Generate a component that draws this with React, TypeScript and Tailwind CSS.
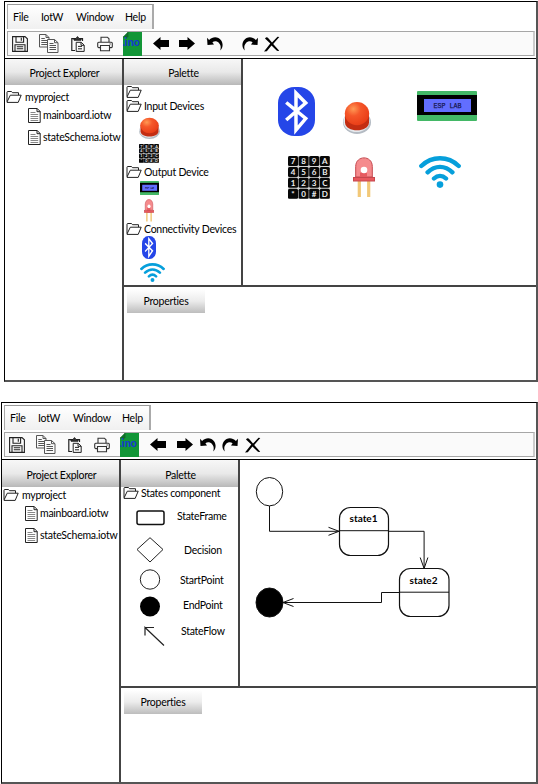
import React from "react";

const label = "block whitespace-pre font-['Lato','Open_Sans',sans-serif] text-[10.5px] leading-[14px] tracking-[-0.25px] text-black";

function Save() {
  return (
    <svg className="block h-4 w-4" viewBox="0 0 16 16" fill="none" stroke="#222" strokeWidth="1.1">
      <path d="M.6.6H13l2.4 2.2v12.6H.6zM4 .8v5.4h7.6V.8M9.3 1.7v3M3 15V8.7h10V15M4.8 10.8h6.4M4.8 12.8h6.4" />
    </svg>
  );
}
function Copy() {
  return (
    <svg className="block h-[19px] w-5" viewBox="0 0 20 19" fill="#fafafa" stroke="#555" strokeWidth="1">
      <path d="M.5.5H7l3 3v9.5H.5zM7 .5v3h3" />
      <path d="M2.3 4.5h3.5M2.3 6.5h6M2.3 8.5h6M2.3 10.5h6" />
      <path d="M8.5 5.5h7l3.5 3.2v9.8H8.5zM15.5 5.5v3.2H19" />
      <path d="M10.5 9.5h4M10.5 11.5h6.5M10.5 13.5h6.5M10.5 15.5h6.5" />
    </svg>
  );
}
function Paste() {
  return (
    <svg className="block h-4 w-[14px]" viewBox="0 0 14 16" fill="none" stroke="#222">
      <path d="M4 14.5H.8V2.6H3M10 2.6h1.5v2.5" strokeWidth="1.2" />
      <path d="M3 2.5h2L6.5.6 8 2.5h2v1.7H3z" fill="#333" />
      <path d="M5.2 6.3h5l3 2.8v6.3h-8zM10 6.3v3h3M7 10.4h4M7 12.8h4" />
    </svg>
  );
}
function Print() {
  return (
    <svg className="block h-4 w-4" viewBox="0 0 16 16" fill="none" stroke="#333" strokeWidth="1.1">
      <path d="M4 6V1.2h6.4L12 2.8V6M3.5 11.6H1.7q-1-.1-1-1V7.3q0-1 1-1h12.6q1 0 1 1v3.3q0 1-1 1h-1.8M3.5 9.5h9v5.2h-9zM12.5 8h1.2" />
    </svg>
  );
}
function Ino() {
  return (
    <span className="relative block h-6 w-[19px] overflow-hidden">
      <svg className="block h-6 w-[19px]" viewBox="0 0 19 24">
        <path d="M5 0H19v24H0V5z" fill="#129637" />
        <path d="M5 0v5H0" fill="#11712c" stroke="#17602a" strokeWidth=".7" />
      </svg>
      <span className="absolute -left-px top-[3px] font-['Lato',sans-serif] text-[11px] font-bold leading-[14px] text-[#1637d4]">.ino</span>
    </span>
  );
}
function Arrow({ right = false }: { right?: boolean }) {
  return (
    <svg className={right ? "block h-[13px] w-4 rotate-180" : "block h-[13px] w-4"} viewBox="0 0 16 13">
      <path d="M0 6.5 7.5 0v3.1H16v6.8H7.5V13z" />
    </svg>
  );
}
function Turn({ redo = false }: { redo?: boolean }) {
  return (
    <svg className={redo ? "block h-[14px] w-4 -scale-x-100" : "block h-[14px] w-4"} viewBox="0 0 16 14">
      <path d="M0 .8 2.1 3C6-1 11.5-.2 14 3.2c2.2 3 2.3 7-.8 10.4 1-3.8.5-6-1.3-7.7-1.9-1.9-4.6-2-6.5-.6L7 7.6.5 8z" />
    </svg>
  );
}
function Cross() {
  return (
    <svg className="block h-4 w-4" viewBox="0 0 16 16">
      <path d="M1 2.5Q3-.3 5 3l3 3.6L13.5.7l1.8.2L9.2 8l6 6.8q-2 .5-3.1-.7L7.5 9.5 2.8 15.2 0 15.4 6.3 7.6z" />
    </svg>
  );
}
function Folder() {
  return (
    <svg className="block h-3 w-4 shrink-0" viewBox="0 0 16 12" fill="none" stroke="#222" strokeWidth="1">
      <path d="M1 10.5V1.3Q1 .5 2 .5h3.5l1 1.2h6v2.4M1 11 4.3 4.2h10.9l-3 7.2H.8" />
    </svg>
  );
}
function Doc() {
  return (
    <svg className="block h-[15px] w-[13px] shrink-0" viewBox="0 0 13 15" fill="#fff" stroke="#222">
      <path d="M.5.5h8.7l3 3v11H.5zM9 .5v3.2h3.2" />
      <path d="M2.5 4.5h5M2.5 6.5h7.7M2.5 8.5h7.7M2.5 10.5h7.7M2.5 12.5h7.7" stroke="#888" strokeWidth="1" />
    </svg>
  );
}

function Bluetooth({ className }: { className: string }) {
  return (
    <svg className={className} viewBox="0 0 36 49" preserveAspectRatio="none">
      <rect width="36" height="49" rx="16" ry="16" fill="#2546e8" />
      <path d="m8 15.5 19 16L17.5 43V6L27 16 8 33" fill="none" stroke="#fff" strokeWidth="3.4" />
    </svg>
  );
}
function PushButton({ className }: { className: string }) {
  return (
    <svg className={className} viewBox="0 0 28 34" preserveAspectRatio="none">
      <defs>
        <radialGradient id="cap" cx=".35" cy=".3" r=".75">
          <stop stopColor="#ff9a55" />
          <stop offset=".4" stopColor="#f5572a" />
          <stop offset="1" stopColor="#e83c16" />
        </radialGradient>
      </defs>
      <ellipse cx="14" cy="22" rx="14" ry="12" fill="#b4bbc3" />
      <ellipse cx="13.5" cy="21" rx="13" ry="11" fill="#e5e9ed" />
      <path d="M2 12h24v10c0 11-24 11-24 0z" fill="#c32d12" />
      <ellipse cx="14" cy="13" rx="12.2" ry="12" fill="url(#cap)" />
    </svg>
  );
}
const keys = ["7", "8", "9", "A", "4", "5", "6", "B", "1", "2", "3", "C", "*", "0", "#", "D"];
function Keypad({ className }: { className: string }) {
  return (
    <svg className={className} viewBox="0 0 42 43" preserveAspectRatio="none">
      <rect width="42" height="43" fill="#d5d5d5" />
      {keys.map((k, i) => (
        <g key={k} transform={`translate(${(i % 4) * 10.6} ${Math.floor(i / 4) * 10.9})`}>
          <rect width="10" height="10" rx="1.5" fill="#080808" />
          <text x="5" y="8" textAnchor="middle" fill="#eee" fontFamily="Lato" fontSize="8" fontWeight="700">{k}</text>
        </g>
      ))}
    </svg>
  );
}
function Lcd({ className }: { className: string }) {
  return (
    <svg className={className} viewBox="0 0 60 30" preserveAspectRatio="none">
      <rect width="60" height="30" rx="1" fill="#43b866" />
      <rect y="4" width="60" height="20" fill="#000" />
      <rect x="7" y="8" width="47" height="13" fill="#626eff" />
      <text x="16.5" y="17.3" fill="#171750" fontFamily="Liberation Mono" fontSize="8" textLength="28" lengthAdjust="spacingAndGlyphs" stroke="#171750" strokeWidth=".25" xmlSpace="preserve">ESP LAB</text>
    </svg>
  );
}
function Led({ className }: { className: string }) {
  return (
    <svg className={className} viewBox="0 0 22 41" preserveAspectRatio="none">
      <path d="M6.3 23v17M15.7 23v17" stroke="#f2c878" strokeWidth="3.2" />
      <path d="M2.7 20V9.5C2.7-2 19.3-2 19.3 9.5V20z" fill="#f58b8d" stroke="#c5484e" />
      <path d="M7 24v-8l3-2 4 2v8" fill="#e65b60" />
      <circle cx="11" cy="13" r="3.3" fill="#fff" />
      <rect x=".5" y="20.5" width="21" height="3.5" fill="#e9585d" stroke="#c5484e" />
    </svg>
  );
}
function Wifi({ className }: { className: string }) {
  return (
    <svg className={className} viewBox="0 0 42 32" preserveAspectRatio="none" fill="none" stroke="#069fdb" strokeLinecap="round" strokeWidth="4.4">
      <path d="M2.3 10C13-.3 29-.3 39.7 10M8.6 16.3c7.4-7.2 17.4-7.2 24.8 0M15 22.5c3.6-3.4 8.4-3.4 12 0" />
      <circle cx="21" cy="28.6" r="3.3" fill="#069fdb" stroke="none" />
    </svg>
  );
}

function MenuBar() {
  return (
    <nav className="ml-[2px] mt-[2px] flex h-[25px] w-[147px] border-l border-r-2 border-t border-l-[#aaa] border-r-[#aaa] border-t-[#999] bg-linear-to-b from-white to-[#f0f0f0] pt-[5px]">
      <span className={`${label} ml-[5px] w-[28px]`}>File</span>
      <span className={`${label} w-[35px]`}>IotW</span>
      <span className={`${label} w-[49px]`}>Window</span>
      <span className={label}>Help</span>
    </nav>
  );
}

function ToolBar({ second = false }: { second?: boolean }) {
  return (
    <div className="ml-[2px] mr-px mt-[2px] flex h-[25px] shrink-0 items-center border border-r-2 border-[#a6a6a6] border-r-[#ccc] bg-[#fafafa]">
      <div className="flex w-[31px] pl-1"><Save /></div>
      <div className="flex w-[32px]"><Copy /></div>
      <div className="flex w-[26px]"><Paste /></div>
      <div className="flex w-[26px]"><Print /></div>
      <div className="flex w-[30px]"><Ino /></div>
      <div className={second ? "flex w-[27px]" : "flex w-[26px]"}><Arrow /></div>
      <div className={second ? "flex w-[23px]" : "flex w-[28px]"}><Arrow right /></div>
      <div className={second ? "flex w-[22px]" : "flex w-[35px]"}><Turn /></div>
      <div className={second ? "flex w-[23px]" : "flex w-[22px]"}><Turn redo /></div>
      <Cross />
    </div>
  );
}

function Header({ children, second = false }: { children: React.ReactNode; second?: boolean }) {
  return (
    <div className={`flex shrink-0 items-center justify-center bg-linear-to-b from-[#f7f7f7] via-[#e9e9e9] to-[#b8b8b8] pl-[2px] ${second ? "h-[27px] pt-[3px]" : "h-[26px] pt-px"}`}>
      <span className={label}>{children}</span>
    </div>
  );
}

function FolderRow({ children }: { children?: React.ReactNode }) {
  return <div className="flex h-[14px] items-center gap-[2px] pl-[2px]"><Folder /><span className={label}>{children}</span></div>;
}

function Explorer({ second = false }: { second?: boolean }) {
  return (
    <aside className="flex w-[119px] shrink-0 flex-col border-r-2 border-[#444]">
      <Header second={second}>Project Explorer</Header>
      <div className={`flex h-[14px] items-center gap-[3px] pl-px ${second ? "mt-px" : "mt-[5px]"}`}><Folder /><span className={label}>myproject</span></div>
      <div className="mt-[3px] flex h-[16px] items-center gap-[2px] pl-[23px]"><Doc /><span className={label}>mainboard.iotw</span></div>
      <div className="mt-[6px] flex h-[16px] items-center gap-[2px] pl-[23px]"><Doc /><span className={label}>stateSchema.iotw</span></div>
    </aside>
  );
}

function Properties() {
  return (
    <section className="flex-1 border-t-2 border-[#444] pl-[3px] pt-[2px]">
      <div className="flex h-[24px] w-[78px] items-center justify-center bg-linear-to-b from-white via-[#ececec] to-[#bdbdbd]">
        <span className={label}>Properties</span>
      </div>
    </section>
  );
}

function DevicePalette() {
  return (
    <aside className="flex w-[119px] shrink-0 flex-col border-r-2 border-[#444]">
      <Header>Palette</Header>
      <FolderRow />
      <FolderRow>Input Devices</FolderRow>
      <PushButton className="ml-[15px] mt-[4px] h-[22px] w-[21px]" />
      <Keypad className="ml-[15px] mt-[5px] h-[19px] w-[20px]" />
      <div className="mt-[2px]"><FolderRow>Output Device</FolderRow></div>
      <Lcd className="ml-[16px] mt-[2px] h-[14px] w-[19px]" />
      <Led className="ml-[20px] mt-[4px] h-[23px] w-[10px]" />
      <FolderRow>Connectivity Devices</FolderRow>
      <Bluetooth className="ml-[18px] mt-0 h-[23px] w-[14px]" />
      <Wifi className="ml-[16px] mt-[4px] h-[19px] w-[25px]" />
    </aside>
  );
}

function StatePalette() {
  return (
    <aside className="flex w-[119px] shrink-0 flex-col border-r-2 border-[#444]">
      <Header second>Palette</Header>
      <div className="-mt-px"><FolderRow>States component</FolderRow></div>
      <div className="mt-[8px] flex h-[32px] items-start pl-[15px]">
        <svg className="mt-[2px] block h-[16px] w-[41px]" viewBox="0 0 41 16"><rect x="1" y="1" width="27" height="13.5" rx="2" fill="none" stroke="#111" strokeWidth="1.5" /></svg>
        <span className={`${label} mt-px`}>StateFrame</span>
      </div>
      <div className="flex h-[28px] items-start pl-[15px]">
        <svg className="-mt-[3px] block h-[26px] w-[48px]" viewBox="0 0 48 26"><path d="M1 12.5 14 .7l13 11.8L14 25z" fill="none" stroke="#222" /></svg>
        <span className={`${label} mt-[3px]`}>Decision</span>
      </div>
      <div className="flex h-[27px] items-start pl-[18px]">
        <svg className="mt-px block h-[21px] w-[41px]" viewBox="0 0 41 21"><circle cx="11" cy="10.5" r="9.7" fill="none" stroke="#222" /></svg>
        <span className={`${label} mt-[5px]`}>StartPoint</span>
      </div>
      <div className="flex h-[28px] items-start pl-[18px]">
        <svg className="mt-px block h-[21px] w-[44px]" viewBox="0 0 44 21"><circle cx="11" cy="10.5" r="10" /></svg>
        <span className={`${label} mt-[3px]`}>EndPoint</span>
      </div>
      <div className="flex h-[26px] items-start pl-[23px]">
        <svg className="mt-[3px] block h-[21px] w-[37px]" viewBox="0 0 37 21" fill="none" stroke="#222" strokeWidth="1.2"><path d="m20 19.5-19-18v8M1 1.5h9" /></svg>
        <span className={`${label} mt-px`}>StateFlow</span>
      </div>
    </aside>
  );
}

function DeviceCanvas() {
  return (
    <main className="relative flex-1">
      <Bluetooth className="absolute left-[35px] top-[28px] h-[49px] w-[37px]" />
      <PushButton className="absolute left-[100px] top-[42px] h-[33px] w-[28px]" />
      <Lcd className="absolute left-[174px] top-[32px] h-[30px] w-[60px]" />
      <Keypad className="absolute left-[45px] top-[97px] h-[43px] w-[42px]" />
      <Led className="absolute left-[110px] top-[98px] h-[41px] w-[22px]" />
      <Wifi className="absolute left-[176px] top-[97px] h-[32px] w-[42px]" />
    </main>
  );
}

function StateCanvas() {
  return (
    <main className="flex-1">
      <svg className="block h-[226px] w-[297px]" viewBox="240 460 297 226" fill="none" stroke="#111" strokeWidth="1">
        <ellipse cx="269.5" cy="491.7" rx="13.2" ry="14.2" />
        <path d="M269.5 506v25.3H339M328.5 527.3l10.5 4-10.5 4" />
        <rect x="339.5" y="507.5" width="49" height="48" rx="11" strokeWidth="1.2" />
        <path d="M339.5 530.7h49M388.5 531.3h35.6v37M420.2 557.5l3.9 11 3.8-11" />
        <rect x="399.5" y="568.5" width="49.5" height="48" rx="11" strokeWidth="1.2" />
        <path d="M399.5 592.2H449M399.5 592.5h-18v10H283M293.5 598.5l-10.5 4 10.5 4" />
        <ellipse cx="269.5" cy="602.5" rx="13.5" ry="14.5" fill="#000" />
        <g fill="#000" stroke="none" fontFamily="Lato, sans-serif" fontSize="10" fontWeight="700">
          <text x="349.5" y="522" textLength="28">state1</text>
          <text x="409.5" y="584" textLength="28">state2</text>
        </g>
      </svg>
    </main>
  );
}

export default function App() {
  return (
    <div className="flex h-[784px] w-[538px] flex-col overflow-hidden bg-white">
      <section className="ml-[4px] mt-px flex h-[381px] w-[534px] shrink-0 flex-col border border-b-2 border-r-2 border-black border-b-[#555] border-r-[#555]">
        <MenuBar />
        <ToolBar />
        <div className="mt-[2px] flex min-h-0 flex-1 border-t border-black">
          <Explorer />
          <div className="flex min-w-0 flex-1 flex-col">
            <div className="flex h-[226px] shrink-0"><DevicePalette /><DeviceCanvas /></div>
            <Properties />
          </div>
        </div>
      </section>
      <section className="ml-px mt-[20px] flex h-[382px] w-[537px] shrink-0 flex-col border border-b-2 border-r-2 border-black border-b-[#555] border-r-[#555]">
        <MenuBar />
        <ToolBar second />
        <div className="mt-[2px] flex min-h-0 flex-1 border-t border-black">
          <Explorer second />
          <div className="flex min-w-0 flex-1 flex-col">
            <div className="flex h-[226px] shrink-0"><StatePalette /><StateCanvas /></div>
            <Properties />
          </div>
        </div>
      </section>
    </div>
  );
}
